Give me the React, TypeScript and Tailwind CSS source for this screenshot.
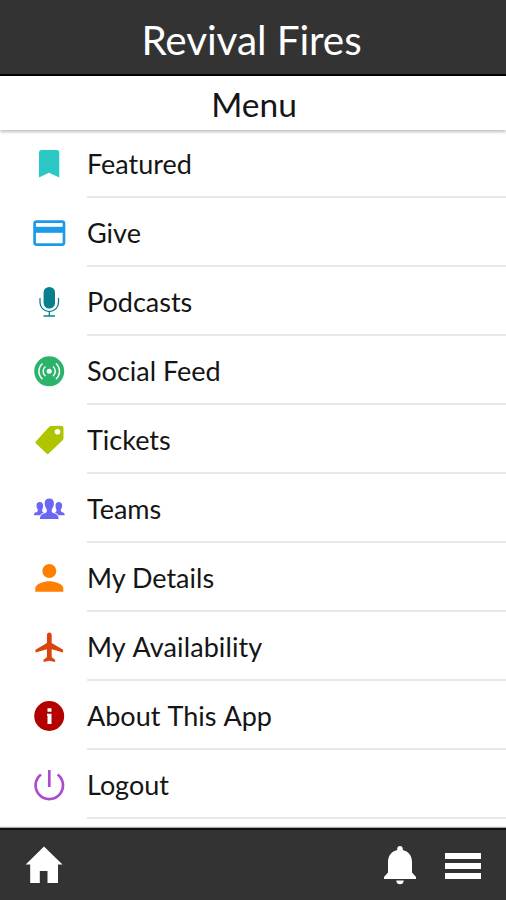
import type { ReactNode } from 'react';

interface MenuItem { label: string; color: string; icon: ReactNode; spacing?: string; }

const ITEMS: MenuItem[] = [
  {
    label: 'Featured',
    color: 'text-[#2bc8c6]',
    icon: <path fill="currentColor" d="M10.5 4h15.300a2.500 2.500 0 0 1 2.500 2.500V31.500L18 26.700 8 31.500V6.500A2.500 2.500 0 0 1 10.500 4z" />,
  },
  {
    label: 'Give',
    color: 'text-[#1b9bea]',
    icon: (
      <>
        <rect x="3.600" y="6.600" width="29.400" height="23" rx="2" fill="none" stroke="currentColor" strokeWidth="2.700" />
        <path fill="currentColor" d="M3 11.800h31v6H3z" />
      </>
    ),
  },
  {
    label: 'Podcasts',
    color: 'text-[#087f8c]',
    icon: (
      <>
        <rect x="12.600" y="3" width="11.400" height="21.500" rx="5.500" fill="currentColor" />
        <path fill="none" stroke="currentColor" strokeWidth="1.300" d="M9 14v4.500a9.200 9 0 0 0 18.500 0V14M18.300 27.500V32M12.500 32h11.500" />
      </>
    ),
  },
  {
    label: 'Social Feed',
    color: 'text-[#2bb36b]',
    icon: (
      <>
        <circle cx="18.200" cy="18.300" r="15" fill="currentColor" />
        <circle cx="18.200" cy="18.300" r="2.500" fill="#fff" />
        <path fill="none" stroke="#fff" strokeWidth="1.500" d="M14.500 13.500a6 6 0 0 0 0 9.600M21.900 13.500a6 6 0 0 1 0 9.600M11.500 10.500a10.300 10.300 0 0 0 0 15.600M24.900 10.500a10.300 10.300 0 0 1 0 15.600" />
      </>
    ),
  },
  {
    label: 'Tickets',
    color: 'text-[#b1c400]',
    icon: (
      <path
        fill="currentColor"
        fillRule="evenodd"
        d="M20 4l10-.2a2.500 2.500 0 0 1 2.500 2.500V16a3 3 0 0 1-.9 2.200L17.500 31.700a1.200 1.200 0 0 1-1.700 0L4.800 21.200a1.200 1.200 0 0 1 0-1.800L18 4.900A3 3 0 0 1 20 4zM26.500 6.900a2.800 2.800 0 1 0 0 5.600 2.800 2.800 0 0 0 0-5.600z"
      />
    ),
  },
  {
    label: 'Teams',
    color: 'text-[#6b66f5]',
    icon: (
      <>
        <path
          fill="currentColor"
          d="M18.300 7.600c-3.200 0-4.800 2-4.600 5.200.1 2.600 1 3.900 1.900 5.200.6 1.200.3 3.200-.8 3.800-2.400 1.200-5.500 1-5.900 6.200h18.800c-.4-5.200-3.500-5-5.900-6.200-1.100-.6-1.400-2.600-.8-3.800.9-1.300 1.800-2.600 1.900-5.200.2-3.200-1.400-5.200-4.600-5.200z"
        />
        <path
          fill="currentColor"
          d="M8.800 11c-2.400 0-3.500 1.600-3.300 4 .1 1.700.7 2.600 1.200 3.500.3.900 0 2-.8 2.400C4.500 21.600 3 21.400 2.800 24.300h6.400c.8-1.500 2.100-2.200 3.700-2.800-1-.5-1.800-1-1.900-1.800 0-1 .9-1.800 1.100-4.700.1-2.400-.9-4-3.300-4zM27.800 11c2.400 0 3.500 1.600 3.300 4-.1 1.700-.7 2.600-1.200 3.500-.3.900 0 2 .8 2.400 1.400.7 2.900.5 3.100 3.400h-6.400c-.8-1.500-2.100-2.200-3.700-2.800 1-.5 1.800-1 1.900-1.800 0-1-.9-1.800-1.100-4.700-.1-2.400.9-4 3.300-4z"
        />
      </>
    ),
  },
  {
    label: 'My Details',
    color: 'text-[#ff8000]',
    icon: (
      <>
        <circle cx="18.300" cy="11" r="7" fill="currentColor" />
        <path fill="currentColor" d="M4.300 31.700v-3.200c0-4.700 9.300-7.200 14-7.200s14 2.500 14 7.200v3.200z" />
      </>
    ),
  },
  {
    label: 'My Availability',
    color: 'text-[#d8450f]',
    spacing: 'tracking-[0.100px] [word-spacing:1.200px]',
    icon: (
      <path
        fill="currentColor"
        d="M18.300 3.500c-1.400 0-2.400 1-2.400 2.400v8L4.500 20.800v2.700l11.400-3.200v7.900l-3.400 2.500V33l5.800-1.300 5.800 1.300v-2.300l-3.400-2.500v-7.900l11.400 3.200v-2.700l-11.400-6.900v-8c0-1.400-1-2.400-2.400-2.400z"
      />
    ),
  },
  {
    label: 'About This App',
    color: 'text-[#b30000]',
    spacing: '[word-spacing:1px]',
    icon: (
      <>
        <circle cx="18.200" cy="18" r="15" fill="currentColor" />
        <path fill="#fff" d="M16.500 10.200h4v3.500h-4zM16 15.700h4.500v10.400H16.500v-8.300H16z" />
      </>
    ),
  },
  {
    label: 'Logout',
    color: 'text-[#ab4bcd]',
    icon: <path fill="none" stroke="currentColor" strokeWidth="2.700" d="M18.300 3v17M10 7.500a13.700 13.700 0 1 0 16.600 0" />,
  },
];

function MenuRow({ label, color, icon, spacing = '' }: MenuItem) {
  return (
    <li className="flex h-[69px] pl-[31px]">
      <svg viewBox="0 0 36 36" className={`mt-[17px] size-9 shrink-0 ${color}`}>{icon}</svg>
      <div className={`ml-5 flex flex-1 items-center border-b-2 border-[#e8e8e8] pt-[2px] text-[27px] leading-none ${spacing}`}>
        {label}
      </div>
    </li>
  );
}

export default function App() {
  return (
    <div className="flex h-[900px] w-[506px] flex-col overflow-hidden bg-white font-['Lato',sans-serif] text-[#151515]">
      <header className="flex h-[76px] shrink-0 items-center justify-center border-b-2 border-black bg-[#333333] pt-[7px] pr-[3px] text-[40.500px] leading-none tracking-[-0.100px] text-white">
        Revival Fires
      </header>
      <h1 className="z-10 flex h-[54px] shrink-0 items-center justify-center bg-white pt-[3px] pl-[2px] text-[33.500px] leading-none shadow-[0_2px_3px_rgba(0,0,0,0.25)]">
        Menu
      </h1>

      <ul className="-mt-px flex-1">
        {ITEMS.map((item) => <MenuRow key={item.label} {...item} />)}
      </ul>

      <nav className="flex h-[72px] shrink-0 items-center border-t-2 border-[#111] bg-[#333333] pr-[25px] pl-[25px] text-white shadow-[0_-1px_1px_#aaaaaa]">
        <svg viewBox="0 0 38 38" className="size-[38px]">
          <path fill="currentColor" d="M19 .5L.7 18.500H5.200V37h9.600V25h7.700v12h10.500V18.500h4.500z" />
        </svg>
        <svg viewBox="0 0 34 40" className="ml-auto h-10 w-[34px]">
          <path fill="currentColor" d="M17 1c-1.700 0-2.800 1.200-2.800 2.900v1C8.500 6.300 5 10.500 5 17v10.500L1 32v2h32v-2l-4-4.500V17c0-6.500-3.500-10.700-9.200-12.100v-1C19.800 2.200 18.700 1 17 1zM13.300 35.500h7.400a3.700 3.700 0 0 1-7.400 0z" />
        </svg>
        <div className="ml-7 flex w-9 flex-col gap-1 pt-px">
          <span className="h-1.5 bg-white" />
          <span className="h-1.5 bg-white" />
          <span className="h-1.5 bg-white" />
        </div>
      </nav>
    </div>
  );
}
